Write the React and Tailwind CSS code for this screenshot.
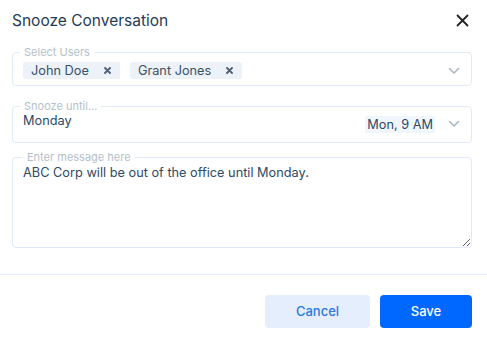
import React from "react";

const Chevron = () => (
  <svg width="12" height="8" viewBox="0 0 12 8" fill="none" className="shrink-0">
    <path d="M1.5 1.5L6 6L10.5 1.5" stroke="#aab6c3" strokeWidth="1.6" strokeLinecap="round" strokeLinejoin="round" />
  </svg>
);

const Chip = ({ label }) => (
  <div className="flex items-center h-[17px] pl-[8px] pr-[9px] bg-[#edf2f8] rounded-[2px] text-[12.75px] leading-[17px] text-[#3b5066]">
    <span>{label}</span>
    <svg width="7" height="7" viewBox="0 0 7 7" className="ml-[15px]">
      <path d="M1 1L6 6M6 1L1 6" stroke="#4b5f75" strokeWidth="1.8" strokeLinecap="round" />
    </svg>
  </div>
);

export default function App() {
  return (
    <div className="w-[487px] h-[341px] bg-white font-['Inter',sans-serif] flex flex-col">
      {/* Header */}
      <div className="flex items-center justify-between pl-[12px] pr-[18px] pt-[9px] h-[33px]">
        <h1 className="text-[15.5px] leading-[24px] text-[#1f3b57]">Snooze Conversation</h1>
        <svg width="13" height="13" viewBox="0 0 13 13" className="-mt-[2px]">
          <path d="M1.5 1.5L11.5 11.5M11.5 1.5L1.5 11.5" stroke="#222" strokeWidth="1.8" strokeLinecap="round" />
        </svg>
      </div>

      <div className="flex flex-col pl-[12px] pr-[15px] mt-[13px]">
        {/* Select users */}
        <fieldset className="border border-[#dfeafa] rounded-[4px] pl-[10px] pr-[11px] pt-[3px] pb-[6px]">
          <legend className="-ml-[3px] px-[4px] text-[11px] leading-[13px] text-[#b4bfca]">Select Users</legend>
          <div className="flex items-center">
            <div className="flex items-center gap-[10px] flex-1">
              <Chip label="John Doe" />
              <Chip label="Grant Jones" />
            </div>
            <Chevron />
          </div>
        </fieldset>

        {/* Snooze until */}
        <fieldset className="mt-[14px] border border-[#dfeafa] rounded-[4px] pl-[10px] pr-[11px] h-[43px]">
          <legend className="-ml-[3px] px-[4px] text-[11px] leading-[13px] text-[#b4bfca]">Snooze until...</legend>
          <div className="flex items-start">
            <span className="flex-1 text-[12.75px] leading-[16px] text-[#2d4a66]">Monday</span>
            <span className="mt-[3px] px-[2px] bg-[#f1f6fc] text-[12.75px] leading-[17px] text-[#2d4a66]">Mon, 9 AM</span>
            <div className="ml-[13px] mt-[7px]">
              <Chevron />
            </div>
          </div>
        </fieldset>

        {/* Message */}
        <fieldset className="mt-[8px] border border-[#dfeafa] rounded-[4px] pl-[10px] pr-0">
          <legend className="ml-0 px-[4px] text-[11px] leading-[13px] text-[#b4bfca]">Enter message here</legend>
          <textarea
            className="block w-full h-[83px] resize-y outline-none text-[12.75px] leading-[16px] text-[#2d4a66] pt-[1px]"
            defaultValue="ABC Corp will be out of the office until Monday."
          />
        </fieldset>
      </div>

      <div className="mt-[26px] h-px bg-[#e5eefb]" />

      <div className="flex justify-end gap-[10px] pr-[15px] mt-[20px]">
        <button className="w-[105px] h-[33px] rounded-[4px] bg-[#e4eefc] text-[#2b78e4] text-[13px] font-medium">Cancel</button>
        <button className="w-[92px] h-[33px] rounded-[4px] bg-[#0068ff] text-white text-[13px] font-medium">Save</button>
      </div>
    </div>
  );
}
